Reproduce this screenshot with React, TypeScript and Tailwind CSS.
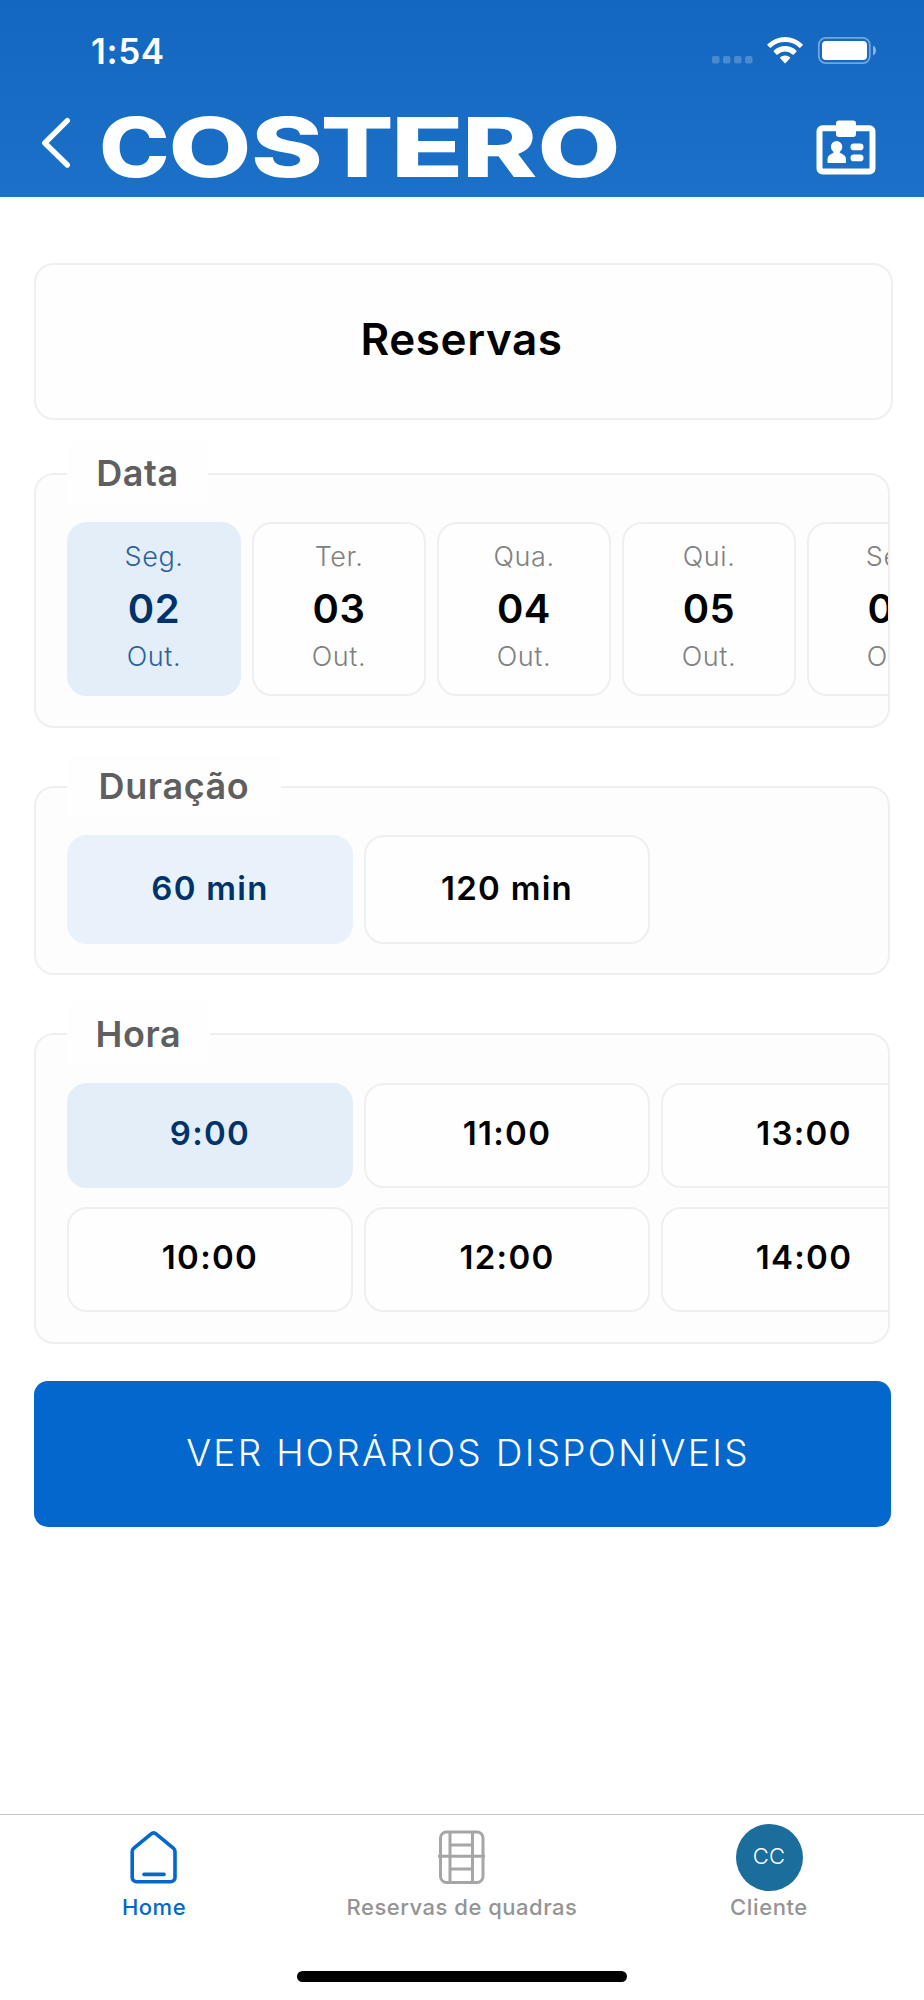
import { useState } from "react";
import clsx from "clsx";

const DAYS = [
  { weekday: "Seg.", day: "02", month: "Out." },
  { weekday: "Ter.", day: "03", month: "Out." },
  { weekday: "Qua.", day: "04", month: "Out." },
  { weekday: "Qui.", day: "05", month: "Out." },
  { weekday: "Sex.", day: "06", month: "Out." },
];

const DURATIONS = ["60 min", "120 min"];

const HOURS = ["9:00", "10:00", "11:00", "12:00", "13:00", "14:00"];

// x offset and horizontal stretch of every letter in the wordmark
const WORDMARK = [
  { letter: "C", x: 99, stretch: 1.16 },
  { letter: "O", x: 168.5, stretch: 1.31 },
  { letter: "S", x: 251, stretch: 1.33 },
  { letter: "T", x: 320.5, stretch: 1.32 },
  { letter: "E", x: 390.5, stretch: 1.47 },
  { letter: "R", x: 461.5, stretch: 1.4 },
  { letter: "O", x: 537.5, stretch: 1.31 },
];

const StatusBar: React.FC = () => (
  <div className="flex h-[100px] items-center justify-between pl-[91px] pr-12">
    <span className="pt-0.5 text-[35px] font-semibold leading-none tracking-[0.6px]">
      1:54
    </span>
    <svg width="168" height="32" viewBox="0 0 168 32" fill="white">
      <g opacity="0.22">
        <rect x="4" y="22" width="7.5" height="7.5" rx="2" />
        <rect x="15" y="22" width="7.5" height="7.5" rx="2" />
        <rect x="26" y="22" width="7.5" height="7.5" rx="2" />
        <rect x="37" y="22" width="7.5" height="7.5" rx="2" />
      </g>
      <path d="M59.5 10.2a25.2 25.2 0 0 1 35.2 0c.3.3.3.8 0 1.1l-2.3 2.3c-.4.4-.9.4-1.3 0a20 20 0 0 0-28 0c-.4.4-.9.4-1.3 0l-2.3-2.3c-.3-.3-.3-.8 0-1.1z" />
      <path d="M65.8 16.7a16.2 16.2 0 0 1 22.6 0c.3.3.3.8 0 1.1l-2.6 2.6c-.4.4-.9.3-1.3 0a10.8 10.8 0 0 0-14.8 0c-.4.3-.9.4-1.3 0l-2.6-2.6c-.3-.3-.3-.8 0-1.1z" />
      <path d="M72.2 23.3a7.4 7.4 0 0 1 9.8 0c.3.3.3.7 0 1l-4.3 4.6c-.3.4-.9.4-1.2 0l-4.3-4.6c-.3-.3-.3-.7 0-1z" />
      <rect
        x="110.8"
        y="3.8"
        width="51"
        height="25.4"
        rx="7"
        fill="none"
        stroke="white"
        strokeOpacity="0.4"
        strokeWidth="1.8"
      />
      <rect x="114" y="7" width="45" height="19" rx="4" />
      <path d="M165 11.5c2 1 3 2.8 3 5s-1 4-3 5z" opacity="0.5" />
    </svg>
  </div>
);

const Header: React.FC = () => (
  <header className="h-[197px] bg-linear-to-b from-[#1467bf] to-[#1b70c7] text-white">
    <StatusBar />
    <div className="flex h-[97px] items-start pl-10 pr-12">
      <button aria-label="Voltar" className="mt-4">
        <svg width="34" height="54" viewBox="0 0 34 54" fill="none">
          <path
            d="M27.3 4.7L4.8 27l22.5 22"
            stroke="white"
            strokeWidth="5.4"
            strokeLinecap="round"
            strokeLinejoin="round"
          />
        </svg>
      </button>
      <svg
        className="ml-6 overflow-visible"
        width="526"
        height="97"
        viewBox="98 100 526 97"
      >
        {WORDMARK.map(({ letter, x, stretch }, index) => (
          <text
            key={index}
            transform={`translate(${x} 176.5) scale(${stretch} 1)`}
            fill="white"
            className="font-[Inter] text-[82px] font-extrabold"
          >
            {letter}
          </text>
        ))}
      </svg>
      <svg
        className="ml-auto mt-[18px]"
        width="62"
        height="60"
        viewBox="0 0 62 60"
        fill="white"
      >
        <rect
          x="5.5"
          y="10.2"
          width="53"
          height="43.3"
          rx="3"
          fill="none"
          stroke="white"
          strokeWidth="6"
        />
        <rect x="22" y="2.5" width="20" height="16.5" rx="3" />
        <path d="M22.5 23a5.6 5.6 0 0 0-5.6 5.7c0 2.6 1.5 4 2.8 5.5-1.5 2-6.2 2-6.2 7.3v2.5c0 .6.5 1 1 1h16.5c.6 0 1-.4 1-1v-2.5c0-5.3-4.9-5.3-6.4-7.3 1.3-1.5 2.7-2.9 2.7-5.5a5.7 5.7 0 0 0-5.8-5.7z" />
        <rect x="36.5" y="25.5" width="13" height="6.8" rx="3.4" />
        <rect x="36.5" y="36.5" width="13" height="6.8" rx="3.4" />
      </svg>
    </div>
  </header>
);

interface PanelProps {
  title: string;
  className: string;
  legendClassName: string;
  children: React.ReactNode;
}

const Panel: React.FC<PanelProps> = ({
  title,
  className,
  legendClassName,
  children,
}) => (
  <section
    className={clsx(
      "w-[856px] rounded-[20px] border-2 border-[#efefef] bg-[#fdfdfd] pl-[31px]",
      className
    )}
  >
    <h2
      className={clsx(
        "-mt-[33px] flex h-[63px] items-center justify-center bg-[#fefefe] text-[36px] font-[560] tracking-[0.6px] text-[#5f5f5f]",
        legendClassName
      )}
    >
      {title}
    </h2>
    <div className="overflow-hidden">{children}</div>
  </section>
);

interface OptionProps {
  label: string;
  active: boolean;
  className: string;
  onClick: () => void;
}

const Option: React.FC<OptionProps> = ({ label, active, className, onClick }) => (
  <button
    onClick={onClick}
    className={clsx(
      "w-[286px] shrink-0 rounded-[20px] border-2 font-[560]",
      active ? "text-[#003369]" : "border-[#efefef] bg-[#fefefe] text-black",
      className
    )}
  >
    {label}
  </button>
);

const TabBar: React.FC = () => (
  <nav className="flex h-[186px] flex-col border-t border-[#c4c4c4] bg-white text-[22px] font-[480] text-[#949494]">
    <div className="grid grid-cols-3">
      <a className="flex flex-col items-center text-[#0367cd]">
        <svg className="mt-[15px]" width="50" height="56" viewBox="0 0 50 56" fill="none">
          <path
            d="M21.9 4.1a4.2 4.2 0 0 1 5.4 0l17 14.1a4.6 4.6 0 0 1 1.7 3.6V47.4a4.4 4.4 0 0 1-4.4 4.4H7.6a4.4 4.4 0 0 1-4.4-4.4V21.8a4.6 4.6 0 0 1 1.7-3.6z"
            stroke="currentColor"
            strokeWidth="3.6"
            strokeLinejoin="round"
          />
          <path d="M15 44.4h20" stroke="currentColor" strokeWidth="3.6" strokeLinecap="round" />
        </svg>
        <span className="mt-[5px] leading-8 tracking-[0.5px]">Home</span>
      </a>
      <a className="flex flex-col items-center">
        <svg
          className="mt-[15px]"
          width="50"
          height="56"
          viewBox="0 0 50 56"
          fill="none"
          stroke="#a6a6a6"
          strokeWidth="3"
        >
          <rect x="3.5" y="2" width="42.5" height="50.5" rx="6" />
          <path d="M13 2v51M35.5 2v51M1 26.3h47M13 15h22.5M13 39h22.5" />
        </svg>
        <span className="mt-[5px] leading-8 tracking-[0.5px]">Reservas de quadras</span>
      </a>
      <a className="mr-0.5 flex flex-col items-center">
        <span className="mt-[9px] flex size-[67px] items-center justify-center rounded-full bg-[#1b6d9c] pb-0.5 text-[22px] font-light tracking-[0.3px] text-white">
          CC
        </span>
        <span className="leading-8 tracking-[0.6px]">Cliente</span>
      </a>
    </div>
    <div className="mx-auto mb-[18px] mt-auto h-[11px] w-[330px] rounded-full bg-black" />
  </nav>
);

const App: React.FC = () => {
  const [day, setDay] = useState("02");
  const [duration, setDuration] = useState("60 min");
  const [hour, setHour] = useState("9:00");

  return (
    <div className="flex h-[2000px] w-[924px] flex-col overflow-hidden bg-white font-[Inter,sans-serif]">
      <Header />
      <main className="flex-1 pl-[34px] pt-[66px]">
        <h1 className="flex h-[157px] w-[859px] items-center justify-center rounded-[20px] border-2 border-[#efefef] bg-[#fefefe] pb-[5px] pr-1 text-[44px] font-[560] tracking-[0.6px] text-black">
          Reservas
        </h1>

        <Panel title="Data" className="mt-[53px] h-[255px]" legendClassName="w-[141px] pb-0.5">
          <div className="mt-[17px] flex gap-[11px]">
            {DAYS.map((item) => (
              <button
                key={item.day}
                onClick={() => setDay(item.day)}
                className={clsx(
                  "flex h-[174px] w-[174px] shrink-0 flex-col items-center rounded-[20px] border-2 pt-[15px] text-[27px] font-light leading-9 tracking-[0.6px]",
                  day === item.day
                    ? "border-[#e4eef9] bg-[#e4eef9] text-[#2b619c]"
                    : "border-[#efefef] bg-[#fefefe] text-[#808080]"
                )}
              >
                <span>{item.weekday}</span>
                <span
                  className={clsx(
                    "mb-0.5 mt-1.5 text-[40px] font-semibold leading-[56px]",
                    day === item.day ? "text-[#003369]" : "text-black"
                  )}
                >
                  {item.day}
                </span>
                <span>{item.month}</span>
              </button>
            ))}
          </div>
        </Panel>

        <Panel title="Duração" className="mt-[58px] h-[189px]" legendClassName="w-[214px] pb-0.5">
          <div className="mt-[17px] flex gap-[11px]">
            {DURATIONS.map((item) => (
              <Option
                key={item}
                label={item}
                active={duration === item}
                onClick={() => setDuration(item)}
                className={clsx(
                  "h-[109px] pb-0.5 text-[33px] tracking-[1.3px]",
                  duration === item && "border-[#e9f2fb] bg-[#e9f2fb]"
                )}
              />
            ))}
          </div>
        </Panel>

        <Panel title="Hora" className="mt-[58px] h-[311px]" legendClassName="w-[143px]">
          <div className="mt-[18px] grid grid-flow-col grid-rows-2 justify-start gap-x-[11px] gap-y-[19px]">
            {HOURS.map((item) => (
              <Option
                key={item}
                label={item}
                active={hour === item}
                onClick={() => setHour(item)}
                className={clsx(
                  "h-[105px] pb-[3px] text-[33px] tracking-[1.3px]",
                  hour === item && "border-[#e4eef9] bg-[#e4eef9]"
                )}
              />
            ))}
          </div>
        </Panel>

        <button className="-ml-[0.5px] mt-[37px] flex h-[146px] w-[857px] items-center justify-center rounded-[14px] bg-[#0367cd] pb-[3px] pl-[12px] text-white">
          <span className="overflow-hidden text-[37px] font-[330] leading-none tracking-[2.3px]">
            VER HORÁRIOS DISPONÍVEIS
          </span>
        </button>
      </main>
      <TabBar />
    </div>
  );
};

export default App;
